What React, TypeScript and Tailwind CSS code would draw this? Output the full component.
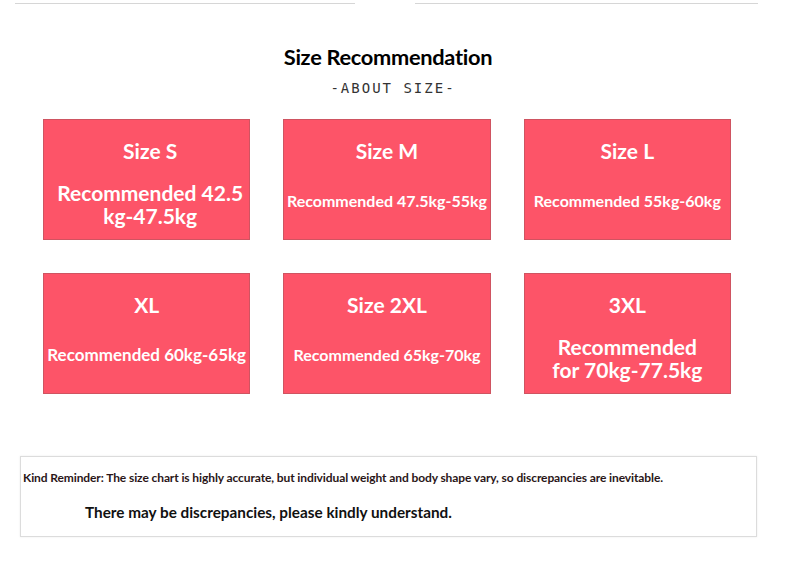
import React from "react";

type Card = {
  title: string;
  lines: string[];
  big?: boolean;
  bodySize?: string;
  shift?: string;
};

const cards: Card[] = [
  { title: "Size S", lines: ["Recommended 42.5", "kg-47.5kg"], big: true, shift: "pl-[7px]" },
  { title: "Size M", lines: ["Recommended 47.5kg-55kg"] },
  { title: "Size L", lines: ["Recommended 55kg-60kg"] },
  { title: "XL", lines: ["Recommended 60kg-65kg"], bodySize: "text-[17px]" },
  { title: "Size 2XL", lines: ["Recommended 65kg-70kg"] },
  { title: "3XL", lines: ["Recommended", "for 70kg-77.5kg"], big: true },
];

function SizeCard({ card }: { card: Card }) {
  return (
    <div
      className={`h-[121px] bg-[#fd5468] border border-[#cf5461] flex flex-col items-center text-white pt-[19px] ${card.shift ?? ""}`}
    >
      <div className="text-[21px] leading-[24px] font-bold">{card.title}</div>
      {card.big ? (
        <div className="mt-[18px] text-[21px] leading-[23px] font-bold text-center">
          {card.lines.map((l) => (
            <div key={l}>{l}</div>
          ))}
        </div>
      ) : (
        <div
          className={`mt-[29px] ${card.bodySize ?? "text-[16px]"} leading-[18px] font-bold whitespace-nowrap`}
        >
          {card.lines[0]}
        </div>
      )}
    </div>
  );
}

export default function App() {
  return (
    <div
      className="w-[790px] h-[561px] bg-white overflow-hidden"
      style={{ fontFamily: "Lato, 'Noto Sans', sans-serif" }}
    >
      {/* top rule */}
      <div className="flex items-center pt-[3px] pl-[15px]">
        <div className="h-px w-[340px] bg-[#d6d6d6]" />
        <div className="h-px w-[343px] ml-[60px] bg-[#d6d6d6]" />
      </div>

      {/* Heading */}
      <div className="flex flex-col items-center mt-[41px] pr-[14px]">
        <h1 className="text-[21.8px] leading-[24px] font-bold text-black tracking-[-0.3px]">
          Size Recommendation
        </h1>
        <div
          className="mt-[11px] ml-[10px] text-[14px] leading-[16px] text-[#333] tracking-[2px]"
          style={{ fontFamily: "'DejaVu Sans Mono', monospace" }}
        >
          -ABOUT SIZE-
        </div>
      </div>

      {/* Cards */}
      <div className="ml-[43px] mt-[23px] w-[688px] grid grid-cols-3 gap-x-[33px] gap-y-[33px]">
        {cards.map((c) => (
          <SizeCard key={c.title} card={c} />
        ))}
      </div>

      {/* Reminder box */}
      <div className="ml-[20px] mt-[62px] w-[737px] h-[81px] border border-[#dcdcdc] shadow-[0_0_2px_rgba(0,0,0,0.08)] flex flex-col">
        <div className="mt-[13px] pl-[2px] text-[12px] leading-[16px] font-bold text-[#2a1618] whitespace-nowrap tracking-[-0.1px]">
          Kind Reminder: The size chart is highly accurate, but individual weight and body shape vary, so discrepancies are inevitable.
        </div>
        <div className="mt-[16px] pl-[64px] text-[15.3px] leading-[20px] font-bold text-[#111]">
          There may be discrepancies, please kindly understand.
        </div>
      </div>
    </div>
  );
}
